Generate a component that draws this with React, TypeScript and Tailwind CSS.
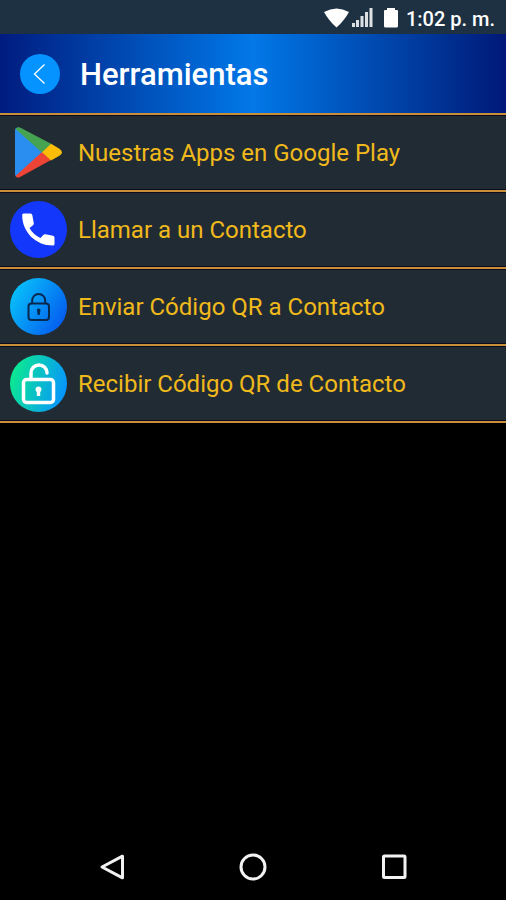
import type { ReactNode } from 'react';

type Tool = {
  label: string;
  icon: ReactNode;
};

function PlayIcon() {
  return (
    <svg viewBox="0 0 57 57" className="h-[57px] w-[57px] shrink-0" aria-hidden="true">
      <path d="M5 6.500Q5 3 9 3.500L35 28 9 53Q5 53.500 5 50z" fill="#2a8df0" />
      <path d="M5.500 5Q7.500 2 11 4L41.500 20 32 28.500z" fill="#45a352" />
      <path d="M5.500 52Q7.500 55 11 52.500L41 36 32 28z" fill="#ee4436" />
      <path d="M41 19.700L49 24.500Q55 28.300 49 32L41 36.500 32 28.200z" fill="#fbbd08" />
    </svg>
  );
}

function PhoneIcon() {
  return (
    <svg viewBox="0 0 57 57" className="h-[57px] w-[57px] shrink-0" aria-hidden="true">
      <circle cx="28.500" cy="28.500" r="28.500" fill="#1338fb" />
      <path
        d="M13.500 12.500H20.500Q22 12.500 22.300 14L23.800 22.300Q24 23.500 23 24.300L19.500 27C22 31.500 26 35 30.500 37L33.500 33.700Q34.300 33 35.500 33.200L43 34.800Q44.500 35.200 44.500 36.500V43Q44.500 44.500 43 44.500C25.500 44.500 12.200 31 12.200 14Q12.200 12.500 13.500 12.500z"
        fill="#fff"
      />
    </svg>
  );
}

function LockIcon() {
  return (
    <svg viewBox="0 0 57 57" className="h-[57px] w-[57px] shrink-0" aria-hidden="true">
      <defs>
        <linearGradient id="lock-bg" x1="0" y1="0.200" x2="1" y2="0.800">
          <stop offset="0" stopColor="#08c5fb" />
          <stop offset="1" stopColor="#0457ee" />
        </linearGradient>
      </defs>
      <circle cx="28.500" cy="28.500" r="28.500" fill="url(#lock-bg)" />
      <g fill="none" stroke="#07284f" strokeWidth="2">
        <rect x="18.500" y="25.500" width="20.500" height="16.500" rx="3" />
        <path d="M22.200 25.500V22.500a6.500 6.500 0 0 1 13 0V25.500" />
      </g>
      <path d="M28.700 30.500a1.800 1.800 0 0 1 1.600 2.600L29.700 37h-2L27.100 33.100A1.800 1.800 0 0 1 28.700 30.500z" fill="#07284f" />
    </svg>
  );
}

function UnlockIcon() {
  return (
    <svg viewBox="0 0 57 57" className="h-[57px] w-[57px] shrink-0" aria-hidden="true">
      <defs>
        <linearGradient id="unlock-bg" x1="0" y1="0.350" x2="1" y2="0.650">
          <stop offset="0.050" stopColor="#0be794" />
          <stop offset="0.950" stopColor="#0797fb" />
        </linearGradient>
      </defs>
      <circle cx="28.500" cy="28.500" r="28.500" fill="url(#unlock-bg)" />
      <g fill="none" stroke="#fff" strokeWidth="3.500" strokeLinecap="round">
        <rect x="13.500" y="24.500" width="30" height="23" rx="3" />
        <path d="M21 24.500V18a8 8 0 0 1 16 0" />
      </g>
      <path d="M28.500 31.500a3 3 0 0 1 1.700 5.500V41h-3.400V37a3 3 0 0 1 1.700-5.500z" fill="#fff" />
    </svg>
  );
}

const tools: Tool[] = [
  { label: 'Nuestras Apps en Google Play', icon: <PlayIcon /> },
  { label: 'Llamar a un Contacto', icon: <PhoneIcon /> },
  { label: 'Enviar Código QR a Contacto', icon: <LockIcon /> },
  { label: 'Recibir Código QR de Contacto', icon: <UnlockIcon /> },
];

function StatusBar() {
  return (
    <div className="flex h-[34px] items-center justify-end gap-1.5 bg-[#1e3143] pt-1 pr-[11px] text-white">
      <svg viewBox="0 0 76 24" className="h-6 w-[76px]" fill="#fff" aria-hidden="true">
        {/* wifi */}
        <path d="M0 5Q12.500-2 25 5Q20 14 12.500 20.500Q5 14 0 5z" />
        {/* signal */}
        <path d="M28 16h3v4h-3zM32 13h3v7h-3zM36.500 9h3v11h-3zM41 5h3v15h-3zM45.500 1h3v19h-3z" fillOpacity="0.850" />
        {/* battery */}
        <path d="M63 1h8v2h2q1 0 1 1v15q0 1.500-1.500 1.500h-11q-1.500 0-1.500-1.500V4q0-1 1-1h2z" />
      </svg>
      <span className="text-[20px] leading-6 font-medium">1:02 p. m.</span>
    </div>
  );
}

function Header() {
  return (
    <header className="flex h-[79px] items-center gap-5 bg-linear-to-r from-[#001b80] via-[#0478e8] to-[#001878] px-5">
      <button type="button" aria-label="Volver" className="flex h-10 w-10 items-center justify-center rounded-full bg-[#0594ff]">
        <svg viewBox="0 0 40 40" className="h-10 w-10" fill="none" stroke="#fff" strokeWidth="1.300" aria-hidden="true">
          <path d="M24.500 10.500L14.500 20l10 9.500" />
        </svg>
      </button>
      <h1 className="pt-0.5 text-[31px] leading-10 font-medium text-white">Herramientas</h1>
    </header>
  );
}

function NavBar() {
  return (
    <nav className="flex h-[67px] items-center justify-around px-[42px]">
      <button type="button" aria-label="Atrás" className="p-2">
        <svg viewBox="0 0 28 28" className="h-7 w-7" fill="none" stroke="#f2f2f2" strokeWidth="3" aria-hidden="true">
          <path d="M24.500 3.200V24.800L4 14z" strokeLinejoin="round" />
        </svg>
      </button>
      <button type="button" aria-label="Inicio" className="p-2">
        <svg viewBox="0 0 28 28" className="h-7 w-7" fill="none" stroke="#f2f2f2" strokeWidth="3" aria-hidden="true">
          <circle cx="14" cy="14" r="12" />
        </svg>
      </button>
      <button type="button" aria-label="Recientes" className="p-2">
        <svg viewBox="0 0 28 28" className="h-7 w-7" fill="none" stroke="#f2f2f2" strokeWidth="3" aria-hidden="true">
          <rect x="3.500" y="3" width="21.500" height="21.500" rx="1" />
        </svg>
      </button>
    </nav>
  );
}

export default function App() {
  return (
    <div className="flex min-h-screen flex-col bg-black font-['Roboto',sans-serif]">
      <StatusBar />
      <Header />
      <main className="flex-1">
        <ul className="border-t-2 border-[#c98f38]">
          {tools.map((tool) => (
            <li key={tool.label} className="border-b-2 border-[#c98f38]">
              <button
                type="button"
                className="flex h-[75px] w-full items-center gap-[11px] border-y border-[#0d0b1e] bg-[#212b33] px-[10px] text-left text-2xl text-[#f0b91c]"
              >
                {tool.icon}
                <span>{tool.label}</span>
              </button>
            </li>
          ))}
        </ul>
      </main>
      <NavBar />
    </div>
  );
}
